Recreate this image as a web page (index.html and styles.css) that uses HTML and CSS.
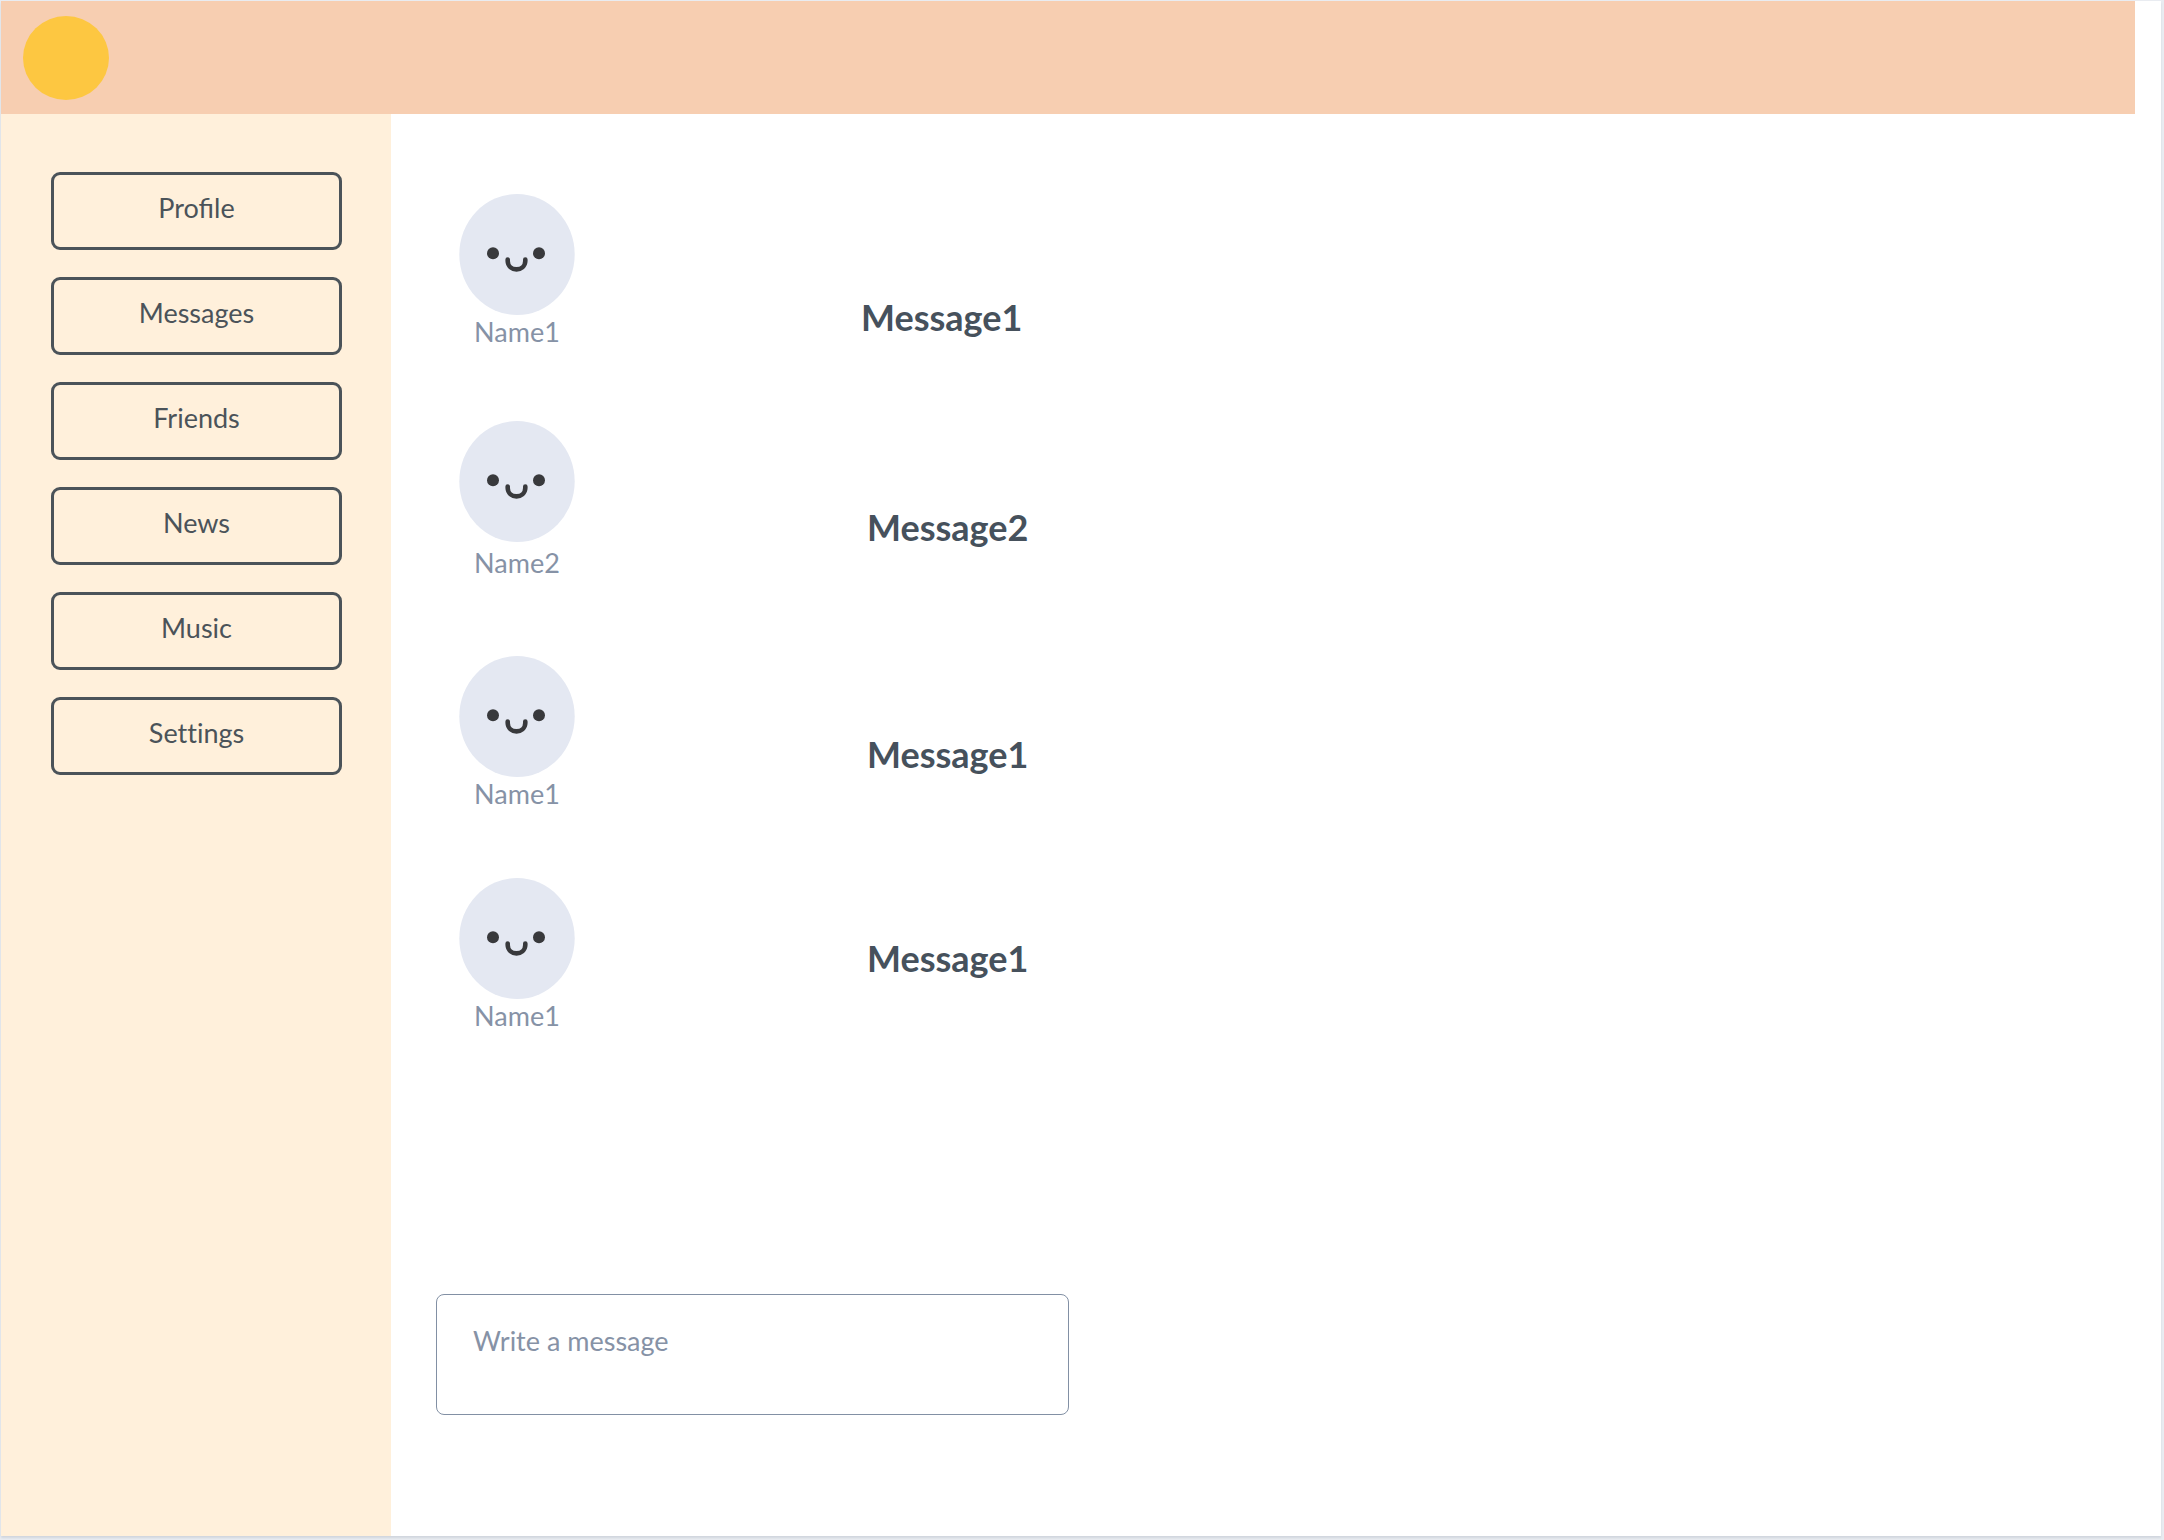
FILE: index.html
```html
<!DOCTYPE html>
<html lang="en">
<head>
<meta charset="utf-8">
<title>Messages</title>
<link rel="stylesheet" href="styles.css">
</head>
<body>
<svg class="sprite" aria-hidden="true">
  <symbol id="avatar" viewBox="0 0 116 121">
    <ellipse cx="58" cy="60.5" rx="57.7" ry="60.5" fill="#e4e8f2"/>
    <circle cx="34" cy="59.3" r="6" fill="#38393c"/>
    <circle cx="80" cy="59.3" r="6" fill="#38393c"/>
    <path d="M48.7 65.5V67C49 78.200 66 78.200 66.300 67V65.500" fill="none" stroke="#38393c" stroke-width="4.600" stroke-linecap="round"/>
  </symbol>
</svg>
<div class="page">
  <header class="topbar"><a class="logo" href="#" aria-label="Home"></a></header>
  <div class="body">
    <nav class="sidebar" aria-label="Main">
      <button class="nav-button" type="button">Profile</button>
      <button class="nav-button" type="button">Messages</button>
      <button class="nav-button" type="button">Friends</button>
      <button class="nav-button" type="button">News</button>
      <button class="nav-button" type="button">Music</button>
      <button class="nav-button nav-settings" type="button">Settings</button>
    </nav>
    <main class="content">
      <ul class="messages">
        <li class="message message-first">
          <div class="person"><svg class="avatar"><use href="#avatar"/></svg><span class="name">Name1</span></div>
          <h2 class="text">Message1</h2>
        </li>
        <li class="message message-second">
          <div class="person"><svg class="avatar"><use href="#avatar"/></svg><span class="name">Name2</span></div>
          <h2 class="text">Message2</h2>
        </li>
        <li class="message message-third">
          <div class="person"><svg class="avatar"><use href="#avatar"/></svg><span class="name">Name1</span></div>
          <h2 class="text">Message1</h2>
        </li>
        <li class="message message-fourth">
          <div class="person"><svg class="avatar"><use href="#avatar"/></svg><span class="name">Name1</span></div>
          <h2 class="text">Message1</h2>
        </li>
      </ul>
      <textarea class="composer" aria-label="Write a message" placeholder="Write a message"></textarea>
    </main>
  </div>
</div>
</body>
</html>
```
FILE: styles.css
```css
* { box-sizing: border-box; }

body {
  margin: 0;
  padding: 1px 3px 4px 1px;
  min-height: 100vh;
  display: flex;
  background: #e9ecf1;
  font-family: Lato, "Liberation Sans", sans-serif;
  font-size: 27px;
  line-height: 34px;
  color: #4b5359;
}

.sprite { display: none; }

.page {
  flex: 1;
  display: flex;
  flex-direction: column;
  background: #fff;
  box-shadow: 0 2px 2px #d0d6de;
}

.topbar {
  display: flex;
  align-items: center;
  height: 113px;
  margin-right: 26px;
  padding-left: 22px;
  background: #f7ceb1;
}

.logo {
  width: 86px;
  height: 84px;
  border-radius: 50%;
  background: #fdc741;
}

.body { flex: 1; display: flex; }

.sidebar {
  width: 390px;
  padding: 58px 49px 0 50px;
  display: flex;
  flex-direction: column;
  gap: 27px;
  background: #fff0db;
}

.nav-button {
  height: 78px;
  padding: 0 0 6px;
  border: 3px solid #4b5359;
  border-radius: 9px;
  background: none;
  font: inherit;
  color: inherit;
}

/* Keeps the two t's as separate letters */
.nav-settings { font-variant-ligatures: none; }

.content { flex: 1; padding: 80px 45px 0; }

.messages { margin: 0; padding: 0; list-style: none; }

.message {
  display: flex;
  align-items: flex-start;
  gap: 292px;
  padding-left: 23px;
}

.message-first { height: 227px; gap: 286px; }
.message-second { height: 235px; }
.message-third { height: 222px; }
.message-fourth { height: 416px; }

.person {
  width: 116px;
  display: flex;
  flex-direction: column;
  align-items: center;
}

.avatar { width: 116px; height: 121px; }

.name { color: #8692a6; }

.message-second .person { gap: 4px; }

.text {
  margin: 0;
  padding-top: 101px;
  font-size: 36px;
  line-height: 44px;
  color: #46515c;
}

.message-second .text { padding-top: 84px; }
.message-third .text { padding-top: 76px; }
.message-fourth .text { padding-top: 58px; }

.composer {
  display: block;
  width: 633px;
  max-width: 100%;
  height: 121px;
  padding: 29px 36px;
  border: 1px solid #8290a4;
  border-radius: 8px;
  background: none;
  font: inherit;
  color: #46515c;
  resize: none;
}

.composer::placeholder { color: #8692a6; opacity: 1; }
```
